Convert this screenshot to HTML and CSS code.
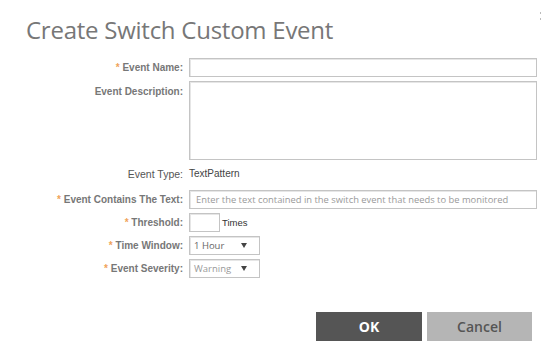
FILE: index.html
```html
<!DOCTYPE html>
<html>
<head>
<meta charset="utf-8">
<link rel="stylesheet" href="styles.css">
</head>
<body>
<div class="dialog">
  <span class="edge-mark"></span>
  <h1 class="title">Create Switch Custom Event</h1>
  <div class="form">
    <div class="row">
      <label class="label"><span class="req">*</span> Event Name:</label>
      <div class="field"><input class="input wide" type="text"></div>
    </div>
    <div class="row row-top gap4">
      <label class="label label-top">Event Description:</label>
      <div class="field"><textarea class="input area"></textarea></div>
    </div>
    <div class="row gap4">
      <label class="label label-plain">Event Type:</label>
      <div class="field"><span class="value">TextPattern</span></div>
    </div>
    <div class="row gap7">
      <label class="label"><span class="req">*</span> Event Contains The Text:</label>
      <div class="field"><input class="input wide ph" type="text" placeholder="Enter the text contained in the switch event that needs to be monitored"></div>
    </div>
    <div class="row gap4">
      <label class="label"><span class="req">*</span> Threshold:</label>
      <div class="field"><input class="input small" type="text"><span class="times">Times</span></div>
    </div>
    <div class="row gap4">
      <label class="label"><span class="req">*</span> Time Window:</label>
      <div class="field">
        <div class="select"><span class="sel-text">1 Hour</span><svg class="caret" width="6" height="5" viewBox="0 0 6 5"><path d="M0 0H6L3 5Z" fill="#444"/></svg></div>
      </div>
    </div>
    <div class="row gap4">
      <label class="label"><span class="req">*</span> Event Severity:</label>
      <div class="field">
        <div class="select"><span class="sel-text light">Warning</span><svg class="caret" width="6" height="5" viewBox="0 0 6 5"><path d="M0 0H6L3 5Z" fill="#444"/></svg></div>
      </div>
    </div>
  </div>
  <div class="actions">
    <button class="btn btn-ok">OK</button>
    <button class="btn btn-cancel">Cancel</button>
  </div>
</div>
</body>
</html>
```

FILE: styles.css
```css
* { box-sizing: border-box; }
html, body { margin: 0; padding: 0; background: #fff; }
body { width: 542px; height: 351px; overflow: hidden; font-family: "Liberation Sans", Arial, sans-serif; }

.dialog { position: relative; padding: 0 5px 0 0; }

.edge-mark {
  position: absolute; right: 1px; top: 12px;
  width: 1px; height: 8px;
  border-top: 2px solid #bbb; border-bottom: 2px solid #bbb;
}

.title {
  margin: 0;
  padding: 14px 0 0 26px;
  height: 46px;
  font-family: "Open Sans", sans-serif;
  font-weight: 400;
  font-size: 24px;
  letter-spacing: -0.25px;
  line-height: 32px;
  color: #777;
}

.form { margin-top: 12px; }

.row {
  display: grid;
  grid-template-columns: 183px 1fr;
  column-gap: 6px;
  align-items: center;
  min-height: 19px;
}
.row-top { align-items: start; }
.gap4 { margin-top: 4px; }
.gap7 { margin-top: 7px; }

.label {
  text-align: right;
  font-size: 10px;
  font-weight: 700;
  color: #777;
  line-height: 12px;
  white-space: nowrap;
}
.label-top { padding-top: 5px; }
.label-plain { font-weight: 400; color: #555; font-size: 10.5px; }
.req { color: #f0a35a; }

.field { display: flex; align-items: center; }

.input {
  display: block;
  height: 19px;
  border: 1px solid #c4c4c4;
  box-shadow: inset 1px 1px 0 #e6e6e6;
  background: #fff;
  margin: 0;
  padding: 0 6px;
  outline: none;
  font-family: "Open Sans", sans-serif;
  font-size: 9.4px;
  color: #444;
}
.wide { width: 348px; }
.area { width: 348px; height: 79px; resize: none; }
.small { width: 31px; }
.ph::placeholder { color: #9a9a9a; opacity: 1; }

.value { font-size: 10px; color: #444; line-height: 12px; }

.times { font-size: 9.5px; color: #333; margin-left: 2px; line-height: 12px; }

.select {
  width: 71px; height: 19px;
  border: 1px solid #c4c4c4;
  box-shadow: inset 1px 1px 0 #e6e6e6;
  display: flex; align-items: center; justify-content: space-between;
  padding: 0 12px 0 4px;
}
.sel-text { font-family: "Open Sans", sans-serif; font-size: 9.5px; color: #666; }
.sel-text.light { color: #999; }
.caret { display: block; }

.actions {
  display: flex;
  justify-content: flex-end;
  gap: 5px;
  margin-top: 34px;
  padding-right: 5px;
}
.btn {
  height: 29px;
  border: 0;
  margin: 0;
  font-family: "Open Sans", sans-serif;
  font-size: 14px;
  cursor: pointer;
}
.btn-ok { width: 106px; background: #555; color: #fff; font-weight: 700; }
.btn-cancel { width: 105px; background: #b5b5b5; color: #555; font-weight: 600; }
```
